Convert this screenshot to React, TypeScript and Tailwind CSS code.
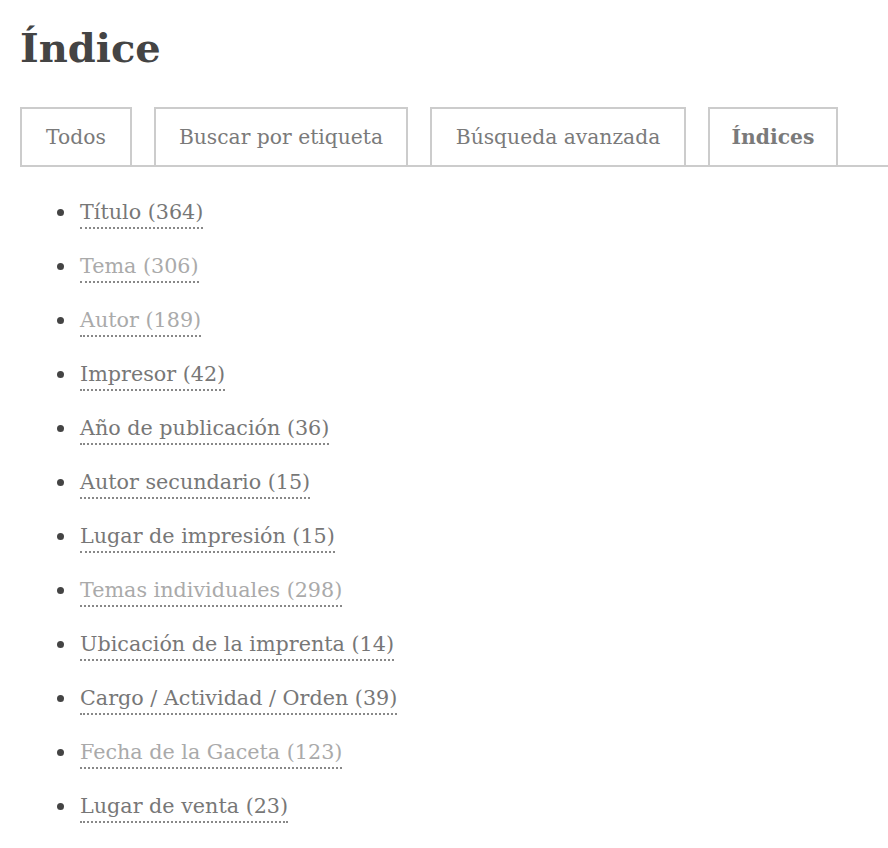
import React from "react";

const items: { label: string; light?: boolean }[] = [
  { label: "Título (364)" },
  { label: "Tema (306)", light: true },
  { label: "Autor (189)", light: true },
  { label: "Impresor (42)" },
  { label: "Año de publicación (36)" },
  { label: "Autor secundario (15)" },
  { label: "Lugar de impresión (15)" },
  { label: "Temas individuales (298)", light: true },
  { label: "Ubicación de la imprenta (14)" },
  { label: "Cargo / Actividad / Orden (39)" },
  { label: "Fecha de la Gaceta (123)", light: true },
  { label: "Lugar de venta (23)" },
];

const tabs = [
  { label: "Todos", w: "w-[112px]" },
  { label: "Buscar por etiqueta", w: "w-[254px]" },
  { label: "Búsqueda avanzada", w: "w-[256px]" },
  { label: "Índices", w: "w-[130px]", active: true },
];

export default function App() {
  return (
    <div className="min-h-[848px] bg-white pl-[20px] pt-[22px] font-['DejaVu_Serif',serif]">
      <h1 className="text-[40px] font-bold leading-[52px] text-[#444]">Índice</h1>
      <div className="mt-[33px] flex gap-[22px] border-b-2 border-[#ccc]">
        {tabs.map((t) => (
          <div
            key={t.label}
            className={`${t.w} -mb-[2px] flex h-[60px] items-center justify-center border-2 border-[#ccc] text-[20.3px] text-[#7a7a7a] ${t.active ? "font-bold" : ""}`}
          >
            {t.label}
          </div>
        ))}
      </div>
      <ul className="mt-[18px] pl-[60px]">
        {items.map((it) => (
          <li key={it.label} className="flex h-[54px] items-center">
            <span className="-ml-[23px] mr-[16px] h-[7px] w-[7px] rounded-full bg-[#444]" />
            <span
              className={`mt-[2px] border-b-2 border-dotted border-[#888] text-[20.7px] leading-[29px] ${it.light ? "text-[#aaa]" : "text-[#777]"}`}
            >
              {it.label}
            </span>
          </li>
        ))}
      </ul>
    </div>
  );
}
